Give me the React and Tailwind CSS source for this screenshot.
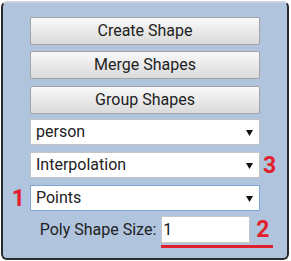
import React from 'react';

const font = { fontFamily: 'Roboto, "Liberation Sans", sans-serif' };

function Btn({ label, className = '' }) {
  return (
    <button
      className={`col-start-2 h-[28px] w-full rounded-[2px] border border-[#a3a3a3] bg-gradient-to-b from-[#f9f9f9] to-[#dadada] text-[16px] leading-none text-[#222] ${className}`}
    >
      {label}
    </button>
  );
}

function Select({ value, focused, className = '' }) {
  return (
    <div
      className={`col-start-2 flex h-[26px] w-full items-center justify-between border bg-white pl-[5px] pr-[6px] text-[16px] leading-none text-[#222] ${
        focused ? 'border-[#7ea6d8]' : 'border-[#c4c4c4]'
      } ${className}`}
    >
      <span>{value}</span>
      <svg width="7" height="7" viewBox="0 0 7 7">
        <polygon points="0,1 7,1 3.5,7" fill="#111" />
      </svg>
    </div>
  );
}

function Mark({ n, className = '' }) {
  return (
    <span className={`text-[23px] font-bold leading-none text-[#e0202c] ${className}`}>{n}</span>
  );
}

export default function App() {
  return (
    <div className="h-[261px] w-[291px] bg-white pl-[1px] pt-[1px]" style={font}>
      <div className="h-[259px] w-[288px] rounded-[6px] border-2 border-[#2a2a2a] border-t-[#c9d2de] bg-[#b0c4de] pt-[14px]">
        <div className="grid grid-cols-[27px_230px_27px] items-center">
          <Btn label="Create Shape" />
          <Btn label="Merge Shapes" className="mt-[6px]" />
          <Btn label="Group Shapes" className="mt-[7px]" />

          <Select value="person" className="mt-[5px]" />

          <Select value="Interpolation" className="mt-[7px]" />
          <Mark n="3" className="col-start-3 mt-[7px] pl-[3px]" />

          <Mark n="1" className="col-start-1 row-start-6 mt-[7px] pr-[5px] text-right" />
          <Select value="Points" focused className="row-start-6 mt-[7px]" />

          <div className="col-start-2 mt-[5px] flex items-center justify-center gap-[5px] text-[16px] text-[#222]">
            <span>Poly Shape Size:</span>
            <div className="relative">
              <input
                defaultValue="1"
                className="h-[27px] w-[89px] border border-[#c8c8c8] bg-white pl-[1px] text-[16px] text-[#111] outline-none"
                style={font}
              />
              <Mark n="2" className="absolute left-[95px] top-[2px]" />
              <div className="absolute left-0 top-[29px] h-[3px] w-[112px] bg-[#e0202c]" />
            </div>
          </div>
        </div>
      </div>
    </div>
  );
}
